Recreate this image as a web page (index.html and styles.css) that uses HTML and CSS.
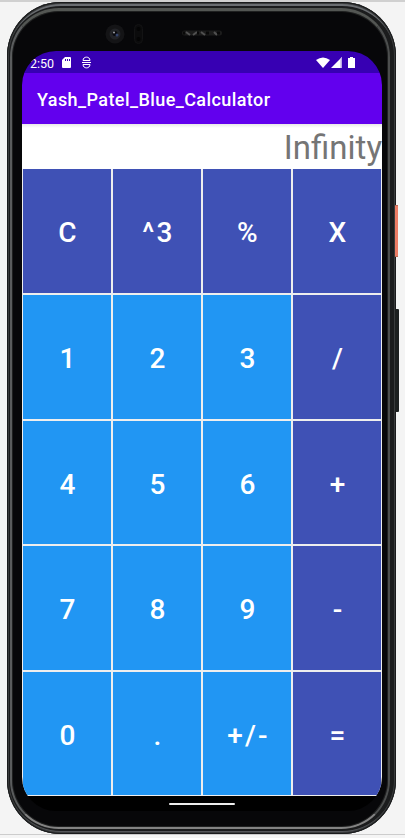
FILE: index.html
```
<!DOCTYPE html>
<html lang="en">
<head>
<meta charset="utf-8">
<title>Yash_Patel_Blue_Calculator</title>
<link rel="stylesheet" href="styles.css">
</head>
<body>
<div class="stage">
<div class="power"></div>
<div class="volume"></div>
<div class="phone">
  <div class="bezel">
    <svg class="sensors" viewBox="0 0 360 34" width="360" height="34" aria-hidden="true">
      <circle cx="93" cy="17" r="9.5" fill="#141416"/>
      <circle cx="93" cy="17" r="5.500" fill="#222327"/>
      <circle cx="93" cy="16.500" r="2.500" fill="#08080c"/>
      <circle cx="92" cy="15.500" r="1" fill="#a0a1a8"/>
      <circle cx="95" cy="18" r="1.500" fill="#34446c"/>
      <rect x="112.500" y="7.500" width="8" height="19" rx="4" fill="#0b0b0c" stroke="#131314"/>
      <circle cx="116.500" cy="12" r="2" fill="#040404"/><circle cx="116.500" cy="22" r="2" fill="#040404"/>
      <rect x="160" y="13.500" width="40" height="5" rx="2.500" fill="#1c1c1c"/>
      <path d="M164 15l4 3M171 18l4-3M179 15l4 3M192 15l3 3" stroke="#505050" stroke-width="2"/>
      <path d="M161 16h2M175 16h2M184 16h3M195 16h3" stroke="#080808" stroke-width="3"/>
    </svg>
    <div class="screen">
      <div class="status">
        <span class="time">2:50</span>
        <svg class="left-icons" viewBox="0 0 32 14" width="32" height="14" aria-hidden="true">
          <path d="M4 1h5q1 0 1 1v9q0 1-1 1H2q-1 0-1-1V4z" fill="#fff"/>
          <path d="M4.500 3v2M6.500 3v2M8.500 3v2" stroke="#3700b3"/>
          <path d="M22 4.500c0-4.500 7-4.500 7 0zM21 6.500h9M22 8.500h7c0 4.500-7 4.500-7 0" fill="none" stroke="#fff" stroke-width="1"/>
        </svg>
        <svg class="right-icons" viewBox="0 0 42 14" width="42" height="14" aria-hidden="true">
          <path d="M0 4Q7-1 14 4L7 12z" fill="#fff"/>
          <path d="M15 12L26 1v11z" fill="#fff"/><path d="M24.500 2.500L26 1v11h-1.500z" fill="#bda8e6"/>
          <path d="M32 2h2V1h3v1h2v10h-7z" fill="#fff"/>
        </svg>
      </div>
      <div class="appbar">Yash_Patel_Blue_Calculator</div>
      <div class="display">Infinity</div>
      <div class="keys">
        <div class="key op">C</div><div class="key op">^3</div><div class="key op">%</div><div class="key op">X</div>
        <div class="key">1</div><div class="key">2</div><div class="key">3</div><div class="key op">/</div>
        <div class="key">4</div><div class="key">5</div><div class="key">6</div><div class="key op">+</div>
        <div class="key">7</div><div class="key">8</div><div class="key">9</div><div class="key op">-</div>
        <div class="key">0</div><div class="key">.</div><div class="key">+/-</div><div class="key op">=</div>
      </div>
      <div class="nav"><div class="handle"></div></div>
    </div>
  </div>
</div>
</div>
</body>
</html>
```
FILE: styles.css
```
* { box-sizing: border-box; }
body { margin: 0; background: #f4f4f4; font-family: Roboto, sans-serif; }
.stage {
  position: relative; width: 405px; height: 838px; overflow: hidden;
  padding: 2px 9px 0 7px;
  background: linear-gradient(#d0d0d0 0 2px, #f4f4f4 2px 834px, #ccc 834px 835px, #f4f4f4 835px);
}
.power, .volume { position: absolute; left: 394px; }
.power { top: 205px; width: 4px; height: 52px; background: #ec7c65; border: solid #b86754; border-width: 1px 0; }
.volume { top: 309px; width: 5px; height: 103px; background: #1d2020; border-radius: 0 1px 1px 0; }
.phone {
  position: relative; width: 389px; height: 832px; padding: 6px 6px 5px 3px;
  border-radius: 54px;
  background: #1b1c1d;
  box-shadow: inset 0 0 0 1px #1a1b1c, inset 0 0 0 2px #3a3c3d, inset 0 4px 0 0 #6a6d71, inset 0 -3px 0 0 #55565a;
}
.power, .volume { z-index: 1; }
.power { left: 395px; width: 3px; }
.volume { left: 395px; width: 4px; }
.bezel {
  height: 821px; border-radius: 49px; padding: 40px 6px 0 10px;
  background: #070709;
  border: solid; border-width: 3px 2px 2px 2px;
  border-color: #535653 #4c4e4e #838383 #5a5c5d;
  box-shadow: inset 0 0 0 1px #1f2020;
}
.sensors { position: absolute; left: 15px; top: 15px; }
.screen { width: 360px; height: 760px; border-radius: 34px; overflow: hidden; background: #000; display: flex; flex-direction: column; }
.status { height: 22px; background: #3700b3; color: #fff; display: flex; align-items: center; padding: 2px 24px 0 8px; font-size: 12.5px; }
.left-icons { margin-left: 7px; }
.right-icons { margin-left: auto; }
.appbar { height: 51px; background: #6200ee; color: #fff; font-size: 18px; font-weight: 500; line-height: 54px; padding-left: 15px; letter-spacing: .42px; }
.display { height: 45px; background: linear-gradient(#e8e8e8, #fff 4px); color: #757575; font-size: 33px; line-height: 47px; text-align: right; }
.keys {
  height: 627px; background: #eee; padding: 0 1px 1px;
  display: grid; grid-template-columns: repeat(4, 88px); grid-template-rows: 124px 124px 123px 124px 123px; gap: 2px;
}
.key { background: #2196f3; color: #fff; display: flex; align-items: center; justify-content: center; font-size: 28px; font-weight: 500; letter-spacing: 2.2px; padding: 3px 0 0 3px; }
.op { background: #3f51b5; }
.nav { flex: 1; display: flex; justify-content: center; padding-top: 7px; }
.handle { width: 66px; height: 2px; background: #eee; border-radius: 1px; }
```
